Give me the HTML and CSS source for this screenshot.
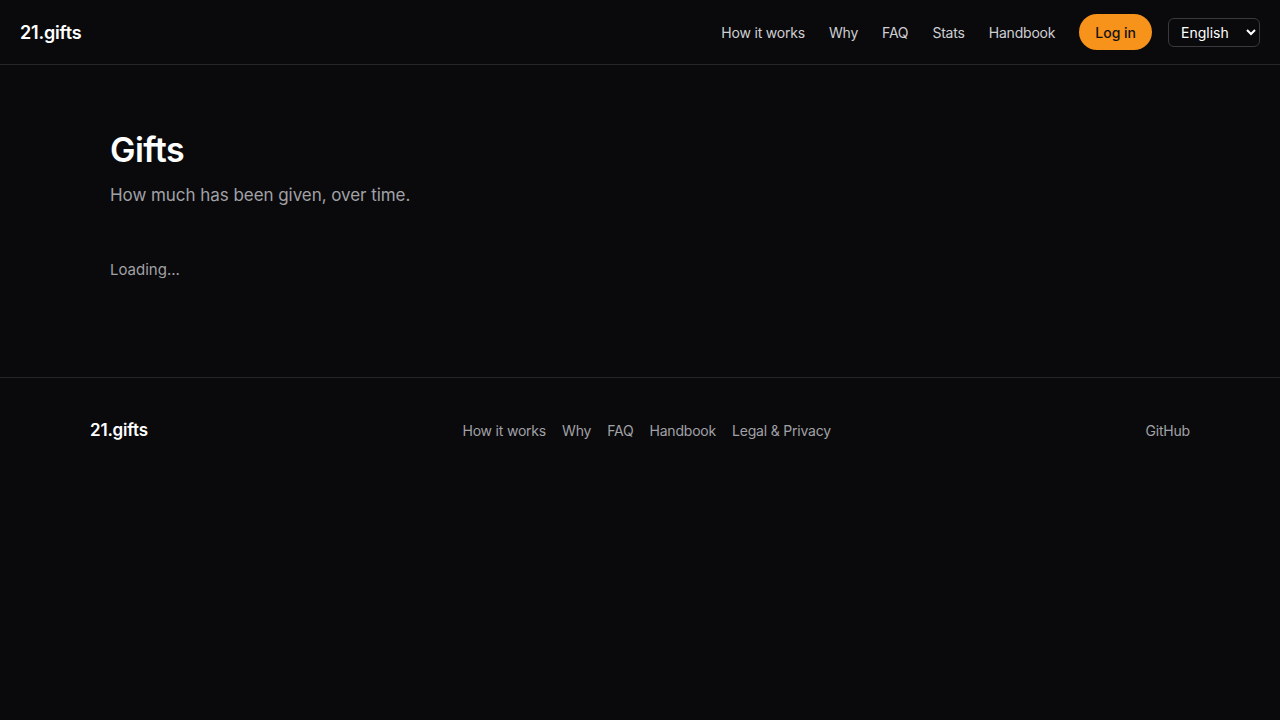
FILE: index.html
```html
<!doctype html>
<html lang="en">
<head>
  <meta charset="utf-8">
  <title>Gifts – 21.gifts</title>
  <link rel="stylesheet" href="styles.css">
</head>
<body>
  <header class="topbar">
    <a class="brand" href="#">21.gifts</a>
    <nav class="topnav">
      <a href="#">How it works</a>
      <a href="#">Why</a>
      <a href="#">FAQ</a>
      <a href="#">Stats</a>
      <a href="#">Handbook</a>
      <button class="login">Log in</button>
      <select class="lang">
        <option>English</option>
        <option>Deutsch</option>
        <option>Español</option>
      </select>
    </nav>
  </header>

  <main class="page">
    <h1>Gifts</h1>
    <p class="lead">How much has been given, over time.</p>
    <p class="loading">Loading...</p>
  </main>

  <footer class="footer">
    <div class="footer-inner">
      <a class="brand brand-small" href="#">21.gifts</a>
      <nav class="footnav">
        <a href="#">How it works</a>
        <a href="#">Why</a>
        <a href="#">FAQ</a>
        <a href="#">Handbook</a>
        <a href="#">Legal &amp; Privacy</a>
      </nav>
      <a class="footlink" href="#">GitHub</a>
    </div>
  </footer>
</body>
</html>
```

FILE: styles.css
```css
:root {
  --bg: #0a0a0c;
  --line: #26262a;
  --text: #ffffff;
  --muted: #a1a1a6;
  --link: #cfcfd3;
  --accent: #f7931a;
}
* { box-sizing: border-box; margin: 0; padding: 0; }
body {
  font-family: Inter, "Noto Sans", sans-serif;
  background: var(--bg);
  color: var(--text);
  min-height: 100vh;
}
a { color: inherit; text-decoration: none; }

/* Top bar */
.topbar {
  height: 65px;
  padding: 0 20px;
  display: flex;
  align-items: center;
  justify-content: space-between;
  border-bottom: 1px solid var(--line);
}
.brand {
  font-size: 18px;
  font-weight: 600;
  letter-spacing: -0.2px;
}
.topnav {
  display: flex;
  align-items: center;
  gap: 24px;
  font-size: 14px;
  letter-spacing: -0.2px;
}
.topnav a { color: var(--link); }
.login {
  font-family: inherit;
  font-size: 14px;
  font-weight: 500;
  color: #111;
  background: var(--accent);
  border: none;
  border-radius: 999px;
  height: 36px;
  padding: 0 16px;
  cursor: pointer;
}
.lang {
  margin-left: -8px;
  font-family: inherit;
  font-size: 14px;
  color: #fff;
  background: var(--bg);
  border: 1px solid #3a3a3e;
  border-radius: 6px;
  height: 29px;
  width: 92px;
  padding: 0 6px 0 8px;
}

/* Page body */
.page {
  max-width: 1100px;
  margin: 0 auto;
  padding: 65px 20px 96px;
}
.page h1 {
  font-size: 34px;
  font-weight: 600;
  line-height: 40px;
  letter-spacing: -0.5px;
}
.lead {
  margin-top: 12px;
  font-size: 17px;
  line-height: 26px;
  letter-spacing: -0.05px;
  color: var(--muted);
}
.loading {
  margin-top: 51px;
  font-size: 15px;
  line-height: 22px;
  color: var(--muted);
}

/* Footer */
.footer {
  border-top: 1px solid var(--line);
  padding: 40px 0;
}
.footer-inner {
  max-width: 1100px;
  margin: 0 auto;
  display: flex;
  align-items: center;
  justify-content: space-between;
}
.brand-small { font-size: 17px; line-height: 24px; }
.footnav {
  display: flex;
  gap: 16px;
  font-size: 14px;
  letter-spacing: -0.2px;
  color: var(--muted);
}
.footlink {
  font-size: 14px;
  letter-spacing: -0.2px;
  color: var(--muted);
}
```
